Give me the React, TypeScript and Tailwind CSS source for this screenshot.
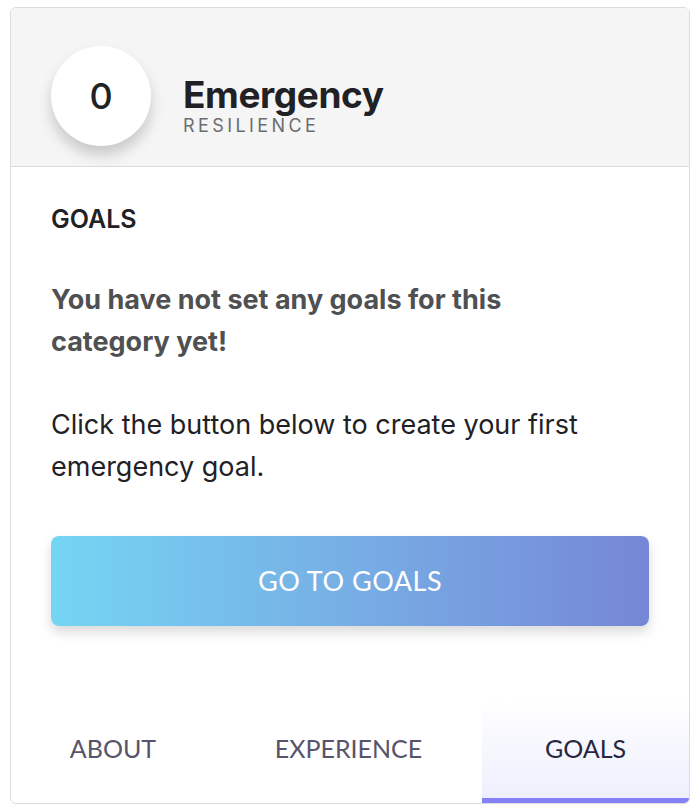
import React from "react";

type Tab = "about" | "experience" | "goals";

const tabs: { id: Tab; label: string; width: string }[] = [
  { id: "about", label: "ABOUT", width: "w-[204px]" },
  { id: "experience", label: "EXPERIENCE", width: "flex-1" },
  { id: "goals", label: "GOALS", width: "w-[207px]" },
];

const App: React.FC = () => {
  const [active, setActive] = React.useState<Tab>("goals");

  return (
    <div className="min-h-screen bg-white pt-[7px] px-[10px] font-['Inter',sans-serif]">
      <div className="w-[680px] border border-[#dcdcdc] rounded-md overflow-hidden bg-white">
        {/* Header */}
        <div className="h-[159px] bg-[#f5f5f5] border-b border-[#dcdcdc] flex items-center pl-[40px] pt-[18px]">
          <div className="w-[100px] h-[100px] rounded-full bg-white shadow-[0_9px_14px_rgba(0,0,0,0.18)] flex items-center justify-center text-[36px] font-medium text-[#222]">
            0
          </div>
          <div className="ml-[32px] flex flex-col mt-[17px]">
            <span className="text-[37px] leading-[43px] font-bold text-[#1f2125] tracking-[-0.4px]">
              Emergency
            </span>
            <span className="text-[18px] leading-[20px] tracking-[3.4px] text-[#6b6d70]">
              RESILIENCE
            </span>
          </div>
        </div>

        {/* Body */}
        <div className="pl-[40px] pr-[70px] pt-[37px]">
          <h3 className="text-[25px] leading-[30px] font-semibold text-[#1f2125]">
            GOALS
          </h3>
          <p className="mt-[45px] text-[27px] leading-[42px] font-bold text-[#4f5052]">
            You have not set any goals for this category yet!
          </p>
          <p className="mt-[41px] text-[27px] leading-[42px] text-[#1f2125]">
            Click the button below to create your first emergency goal.
          </p>
        </div>
        <div className="px-[40px]">
          <button className="mt-[48px] w-full h-[90px] rounded-lg bg-gradient-to-r from-[#74d5f3] to-[#7587d6] shadow-[0_6px_12px_rgba(0,0,0,0.15)] text-white text-[27px] tracking-[0.5px] font-['Lato',sans-serif]">
            GO TO GOALS
          </button>
        </div>

        {/* Tabs */}
        <div className="mt-[74px] flex h-[103px]">
          {tabs.map((t) => {
            const isActive = t.id === active;
            return (
              <button
                key={t.id}
                onClick={() => setActive(t.id)}
                className={
                  isActive
                    ? `${t.width} flex items-center justify-center bg-gradient-to-b from-white to-[#edeffd] border-b-[5px] border-[#8580f5] text-[25px] text-[#272742] font-['Lato',sans-serif]`
                    : `${t.width} flex items-center justify-center border-b-[5px] border-transparent text-[25px] text-[#57546b] font-['Lato',sans-serif]`
                }
              >
                {t.label}
              </button>
            );
          })}
        </div>
      </div>
    </div>
  );
};

export default App;
